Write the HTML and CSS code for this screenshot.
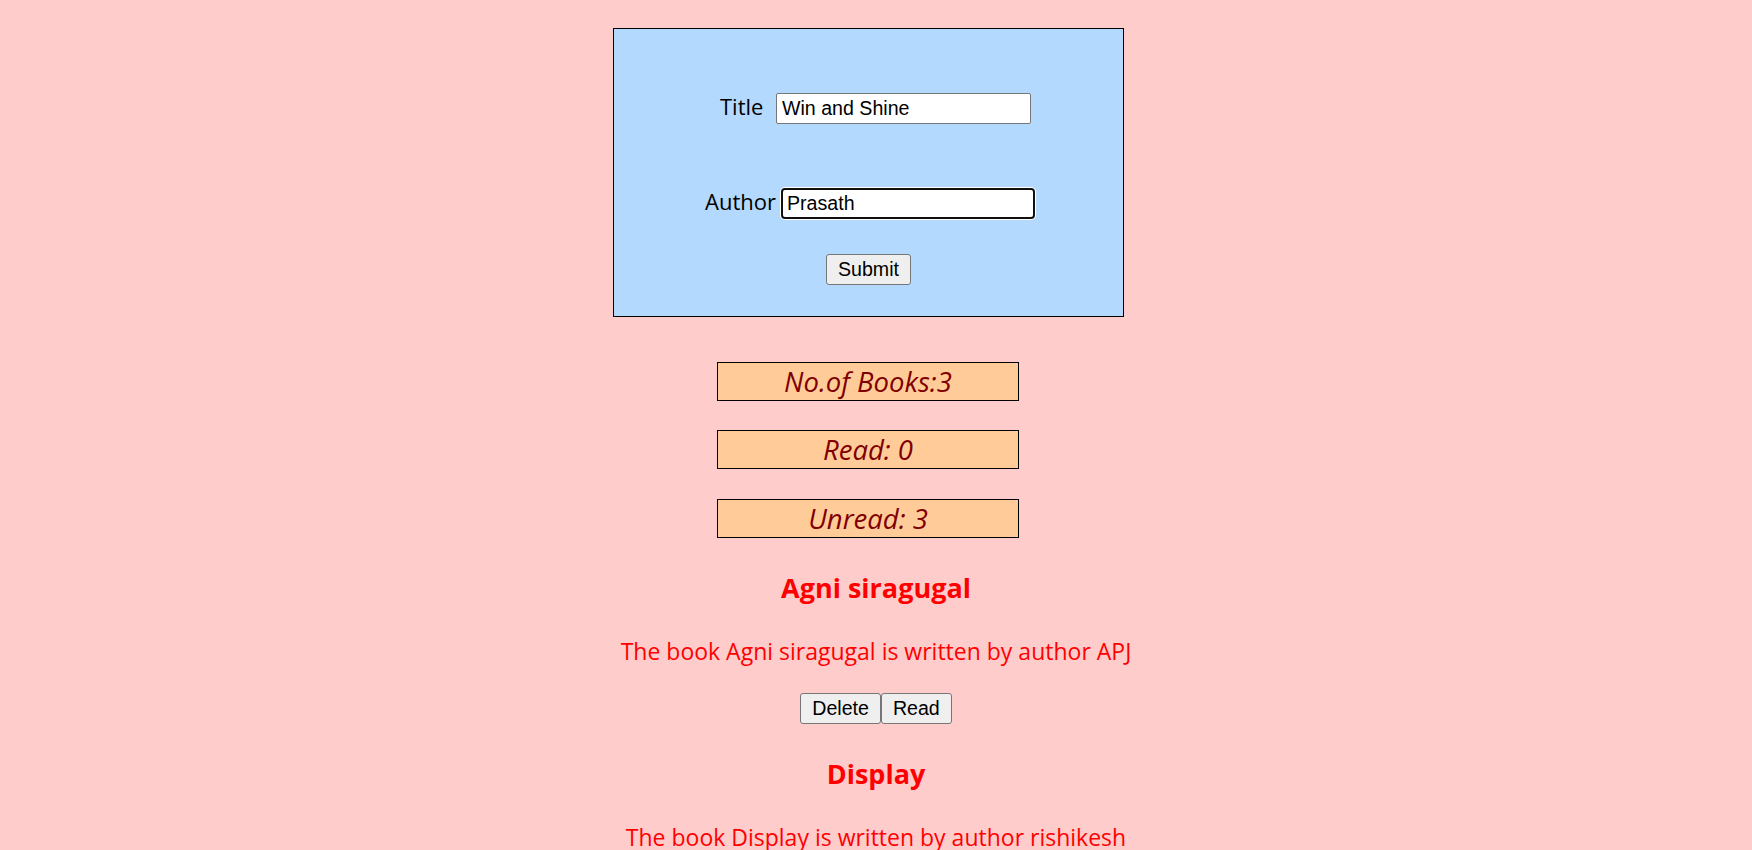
FILE: index.html
```html
<!DOCTYPE html>
<html lang="en">
<head>
<meta charset="utf-8">
<title>Books</title>
<link rel="stylesheet" href="styles.css">
</head>
<body>
  <form class="book-form">
    <div class="row row-title">
      <label class="lbl lbl-title" for="title">Title</label>
      <input class="field" id="title" type="text" value="Win and Shine">
    </div>
    <div class="row row-author">
      <label class="lbl lbl-author" for="author">Author</label>
      <input class="field field-focus" id="author" type="text" value="Prasath">
    </div>
    <div class="row row-submit">
      <button class="btn" type="button">Submit</button>
    </div>
  </form>

  <div class="stats">
    <div class="stat">No.of Books:3</div>
    <div class="stat">Read: 0</div>
    <div class="stat stat-last">Unread: 3</div>
  </div>

  <div class="books">
    <div class="book">
      <h3 class="book-title">Agni siragugal</h3>
      <p class="book-desc">The book Agni siragugal is written by author APJ</p>
      <div class="book-actions">
        <button class="btn" type="button">Delete</button><button class="btn" type="button">Read</button>
      </div>
    </div>
    <div class="book">
      <h3 class="book-title">Display</h3>
      <p class="book-desc">The book Display is written by author rishikesh</p>
    </div>
  </div>
</body>
</html>
```

FILE: styles.css
```css
html, body {
  margin: 0;
  padding: 0;
}
body {
  background: #ffcccc;
  font-family: "Open Sans", "Noto Sans", sans-serif;
  overflow: hidden;
  height: 850px;
}

.book-form {
  box-sizing: border-box;
  width: 511px;
  height: 289px;
  margin: 28px 0 0 613px;
  border: 1px solid #000;
  background: #b3d9ff;
  padding: 64px 0 0 0;
  display: flex;
  flex-direction: column;
}

.row {
  display: flex;
  align-items: baseline;
}
.row-title {
  padding-left: 106px;
}
.row-author {
  padding-left: 91px;
  margin-top: 64px;
}
.row-submit {
  justify-content: center;
  margin-top: 35px;
}

.lbl {
  font-family: "Open Sans", "Noto Sans", sans-serif;
  font-size: 22px;
  line-height: 27px;
  color: #000;
  white-space: nowrap;
}
.lbl-title {
  width: 43px;
  margin-right: 13px;
}
.lbl-author {
  width: 72px;
  margin-right: 4px;
}

.field {
  box-sizing: border-box;
  width: 255px;
  height: 31px;
  margin: 0;
  border: 1px solid #767676;
  border-radius: 2px;
  background: #fff;
  padding: 0 5px;
  font-family: "Liberation Sans", Arial, sans-serif;
  font-size: 19.6px;
  color: #000;
  outline: none;
}
.field-focus {
  width: 254px;
  border: 2px solid #101010;
  border-radius: 4px;
  padding: 0 4px;
  box-shadow: 0 0 0 1px #fff;
}

.btn {
  box-sizing: border-box;
  height: 31px;
  margin: 0;
  padding: 0 11px;
  border: 1px solid #767676;
  border-radius: 3px;
  background: #efefef;
  font-family: "Liberation Sans", Arial, sans-serif;
  font-size: 19.6px;
  color: #000;
  line-height: 29px;
}

.stats {
  margin-top: 45px;
  display: flex;
  flex-direction: column;
  gap: 29px;
}
.stat {
  box-sizing: border-box;
  width: 302px;
  height: 39px;
  margin-left: 717px;
  padding-top: 1px;
  border: 1px solid #000;
  background: #ffcc99;
  color: #800000;
  font-style: italic;
  font-size: 27.5px;
  line-height: 36px;
  text-align: center;
}
.stat-last {
  margin-top: 1px;
}

.books {
  text-align: center;
  color: #ff0000;
}
.book-title {
  margin: 32px 0 0 0;
  font-size: 27px;
  font-weight: 700;
  line-height: 36px;
}
.book-desc {
  margin: 30px 0 0 0;
  font-size: 23px;
  line-height: 30px;
}
.book-actions {
  margin-top: 27px;
  display: flex;
  justify-content: center;
}
```
